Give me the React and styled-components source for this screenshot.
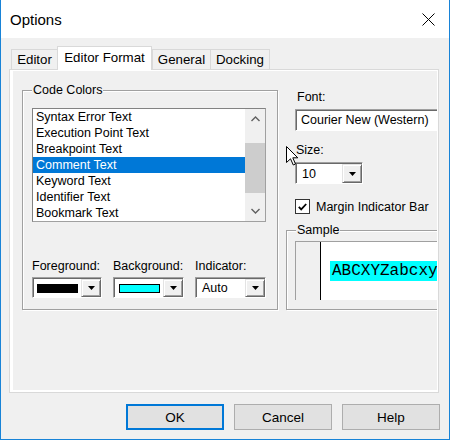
import React from 'react';
import styled, { createGlobalStyle } from 'styled-components';

const Global = createGlobalStyle`
  html, body { margin: 0; padding: 0; background: #fff; }
  body { font-family: "Liberation Sans", Arial, sans-serif; color: #000; }
  * { box-sizing: border-box; }
`;

const Window = styled.div`
  position: relative;
  width: 450px;
  height: 440px;
  border: 1px solid #1883d7;
  border-top: none;
  background: #f0f0f0;
  display: flex;
  flex-direction: column;
  overflow: hidden;
`;

const TitleBar = styled.div`
  height: 38px;
  flex: none;
  background: #fff;
  display: flex;
  align-items: center;
  justify-content: space-between;
  padding: 1px 14px 0 9px;
`;

const Title = styled.span`
  font-size: 15px;
`;

const Body = styled.div`
  flex: 1;
  display: flex;
  flex-direction: column;
  padding: 8px 9px 9px 8px;
`;

const TabStrip = styled.div`
  height: 23px;
  display: flex;
  align-items: flex-end;
  padding-left: 2px;
  position: relative;
  z-index: 2;
`;

const Tab = styled.div`
  width: ${p => p.$w}px;
  height: ${p => (p.$active ? 24 : 20)}px;
  margin-bottom: ${p => (p.$active ? -1 : 0)}px;
  margin-right: ${p => (p.$active ? 0 : -1)}px;
  background: ${p => (p.$active ? '#fff' : '#f0f0f0')};
  border: 1px solid #d9d9d9;
  border-bottom: none;
  display: flex;
  align-items: center;
  justify-content: center;
  padding-bottom: ${p => (p.$active ? 2 : 0)}px;
  font-size: 13.3px;
  position: relative;
  z-index: ${p => (p.$active ? 2 : 1)};
  white-space: nowrap;
`;

const Panel = styled.div`
  width: 430px;
  height: 324px;
  border: 1px solid #d9d9d9;
  background: #fff;
  padding: 1px 1px 2px 3px;
  display: flex;
`;

const PanelBody = styled.div`
  flex: 1;
  background: #f0f0f0;
  display: flex;
  align-items: flex-start;
  gap: 8px;
  padding: 12px 0 0 9px;
  overflow: hidden;
  font-size: 12.5px;
`;

const Group = styled.div`
  position: relative;
  flex: none;
  width: ${p => p.$w}px;
  height: ${p => p.$h}px;
  margin-top: ${p => p.$mt || 7}px;
  border: 1px solid #a0a0a0;
  box-shadow: 1px 1px 0 #fff, inset 1px 1px 0 #fff;
  padding: ${p => p.$pad};
`;

const Legend = styled.span`
  position: absolute;
  top: -8px;
  left: 9px;
  padding: 0 1px;
  line-height: 14px;
  background: #f0f0f0;
`;

const ListBox = styled.div`
  width: 234px;
  height: 114px;
  display: flex;
  background: #fff;
  border: 1px solid #a0a0a0;
  border-top-color: #828282;
  border-left-color: #828282;
`;

const Items = styled.div`
  flex: 1;
  display: flex;
  flex-direction: column;
`;

const Item = styled.div`
  height: 16px;
  line-height: 16px;
  padding-left: 3px;
  white-space: nowrap;
  background: ${p => (p.$sel ? '#0078d7' : 'transparent')};
  color: ${p => (p.$sel ? '#fff' : '#000')};
`;

const ScrollBar = styled.div`
  width: 20px;
  display: flex;
  flex-direction: column;
  background: #f0f0f0;
`;

const ScrollArrow = styled.div`
  height: 20px;
  display: flex;
  align-items: center;
  justify-content: center;
`;

const Track = styled.div`
  flex: 1;
`;

const Thumb = styled.div`
  margin-top: 14px;
  height: 50px;
  background: #cdcdcd;
`;

const PickerRow = styled.div`
  display: grid;
  grid-template-columns: 70px 71px 71px;
  column-gap: 11px;
  margin-top: 37px;
`;

const Field = styled.div`
  display: flex;
  flex-direction: column;
  gap: 4px;
`;

const Label = styled.div`
  line-height: 14px;
  white-space: nowrap;
  padding-left: ${p => p.$pl || 0}px;
`;

const Combo = styled.div`
  width: ${p => p.$w || 'auto'};
  height: ${p => p.$h || 21}px;
  display: flex;
  align-items: stretch;
  background: #fff;
  border: 1px solid #fff;
  border-top-color: #a0a0a0;
  border-left-color: #a0a0a0;
  box-shadow: inset 1px 1px 0 #696969;
  padding: 1px 0 0 1px;
`;

const Swatch = styled.div`
  flex: 1;
  margin: 5px 3px 4px ${p => p.$ml}px;
  background: ${p => p.$c};
  border: 1px solid #000;
`;

const ComboText = styled.div`
  flex: 1;
  display: flex;
  align-items: center;
  padding-left: 5px;
  line-height: 14px;
`;

const DropButton = styled.div`
  width: 20px;
  flex: none;
  background: #f0f0f0;
  border: 1px solid #696969;
  border-top-color: #e3e3e3;
  border-left-color: #e3e3e3;
  box-shadow: inset 1px 1px 0 #fff, inset -1px -1px 0 #a0a0a0;
  display: flex;
  align-items: center;
  justify-content: center;
`;

const RightCol = styled.div`
  flex: none;
  width: 172px;
  display: flex;
  flex-direction: column;
`;

const TextBox = styled.div`
  margin-left: 9px;
  width: 170px;
  height: 22px;
  background: #fff;
  border: 1px solid #fff;
  border-top-color: #a0a0a0;
  border-left-color: #a0a0a0;
  box-shadow: inset 1px 1px 0 #696969;
  display: flex;
  align-items: center;
  padding-left: 5px;
  white-space: nowrap;
  font-size: 12.5px;
`;

const CheckRow = styled.div`
  margin: 15px 0 0 9px;
  display: flex;
  align-items: center;
  gap: 6px;
  white-space: nowrap;
`;

const CheckBox = styled.div`
  width: 15px;
  height: 15px;
  background: #fff;
  border: 1px solid #333;
  display: flex;
  align-items: center;
  justify-content: center;
`;

const SampleBox = styled.div`
  width: 170px;
  height: 59px;
  display: flex;
  border-top: 1px solid #a0a0a0;
  border-left: 1px solid #a0a0a0;
  background: #fff;
`;

const MarginStrip = styled.div`
  width: 25px;
  background: #f0f0f0;
  border-right: 1px solid #000;
`;

const SampleArea = styled.div`
  flex: 1;
  padding: 19px 0 0 9px;
  white-space: nowrap;
`;

const SampleText = styled.span`
  display: inline-block;
  font-family: "Liberation Mono", "Courier New", monospace;
  font-size: 16px;
  line-height: 20px;
  height: 20px;
  padding: 0 2px;
  background: #00ffff;
`;

const ButtonRow = styled.div`
  display: flex;
  justify-content: flex-end;
  gap: 10px;
  margin-top: 11px;
`;

const Button = styled.div`
  width: 98px;
  height: 26px;
  background: #e1e1e1;
  border: ${p => (p.$default ? '2px solid #0078d7' : '1px solid #adadad')};
  display: flex;
  align-items: center;
  justify-content: center;
  font-size: 13.5px;
`;

const Cursor = styled.svg`
  position: absolute;
  left: 285px;
  top: 146px;
  z-index: 10;
`;

const Triangle = () => (
  <svg width="7" height="4" viewBox="0 0 7 4">
    <polygon points="0,0 7,0 3.5,4" fill="#000" />
  </svg>
);

const Chevron = ({ up }) => (
  <svg width="9" height="6" viewBox="0 0 9 6">
    <polyline
      points={up ? '0.5,5 4.5,1 8.5,5' : '0.5,1 4.5,5 8.5,1'}
      fill="none"
      stroke="#606060"
      strokeWidth="1.4"
    />
  </svg>
);

const items = [
  'Syntax Error Text',
  'Execution Point Text',
  'Breakpoint Text',
  'Comment Text',
  'Keyword Text',
  'Identifier Text',
  'Bookmark Text',
];

export default function App() {
  return (
    <>
      <Global />
      <Window>
        <TitleBar>
          <Title>Options</Title>
          <svg width="13" height="13" viewBox="0 0 13 13">
            <path d="M0.5 0.5 L12.5 12.5 M12.5 0.5 L0.5 12.5" stroke="#000" strokeWidth="1" fill="none" />
          </svg>
        </TitleBar>
        <Body>
          <TabStrip>
            <Tab $w={47}>Editor</Tab>
            <Tab $w={95} $active>Editor Format</Tab>
            <Tab $w={59}>General</Tab>
            <Tab $w={60}>Docking</Tab>
          </TabStrip>
          <Panel>
            <PanelBody>
              <Group $w={256} $h={220} $pad="17px 0 0 9px">
                <Legend>Code Colors</Legend>
                <ListBox>
                  <Items>
                    {items.map(t => (
                      <Item key={t} $sel={t === 'Comment Text'}>{t}</Item>
                    ))}
                  </Items>
                  <ScrollBar>
                    <ScrollArrow><Chevron up /></ScrollArrow>
                    <Track><Thumb /></Track>
                    <ScrollArrow><Chevron /></ScrollArrow>
                  </ScrollBar>
                </ListBox>
                <PickerRow>
                  <Field>
                    <Label>Foreground:</Label>
                    <Combo>
                      <Swatch $c="#000" $ml={3} />
                      <DropButton><Triangle /></DropButton>
                    </Combo>
                  </Field>
                  <Field>
                    <Label>Background:</Label>
                    <Combo>
                      <Swatch $c="#00ffff" $ml={4} />
                      <DropButton><Triangle /></DropButton>
                    </Combo>
                  </Field>
                  <Field>
                    <Label>Indicator:</Label>
                    <Combo>
                      <ComboText>Auto</ComboText>
                      <DropButton><Triangle /></DropButton>
                    </Combo>
                  </Field>
                </PickerRow>
              </Group>
              <RightCol>
                <Label $pl={11} style={{ marginTop: 7 }}>Font:</Label>
                <TextBox style={{ marginTop: 5 }}>Courier New (Western)</TextBox>
                <Label $pl={10} style={{ marginTop: 12 }}>Size:</Label>
                <Combo $w="68px" $h={22} style={{ marginTop: 5, marginLeft: 9 }}>
                  <ComboText>10</ComboText>
                  <DropButton><Triangle /></DropButton>
                </Combo>
                <CheckRow>
                  <CheckBox>
                    <svg width="9" height="8" viewBox="0 0 9 8">
                      <polyline points="0.8,3.8 3.2,6.4 8.2,1" fill="none" stroke="#000" strokeWidth="1.8" />
                    </svg>
                  </CheckBox>
                  <span>Margin Indicator Bar</span>
                </CheckRow>
                <Group $w={172} $h={80} $mt={16} $pad="10px 0 0 8px">
                  <Legend>Sample</Legend>
                  <SampleBox>
                    <MarginStrip />
                    <SampleArea>
                      <SampleText>ABCXYZabcxyz</SampleText>
                    </SampleArea>
                  </SampleBox>
                </Group>
              </RightCol>
            </PanelBody>
          </Panel>
          <ButtonRow>
            <Button $default>OK</Button>
            <Button>Cancel</Button>
            <Button>Help</Button>
          </ButtonRow>
        </Body>
        <Cursor width="13" height="20" viewBox="0 0 13 20">
          <polygon
            points="0.5,0.5 0.5,16.5 4.5,12.8 7.3,19 9.5,18 6.8,11.8 11.8,11.8"
            fill="#fff"
            stroke="#000"
            strokeWidth="1"
            strokeLinejoin="miter"
          />
        </Cursor>
      </Window>
    </>
  );
}
